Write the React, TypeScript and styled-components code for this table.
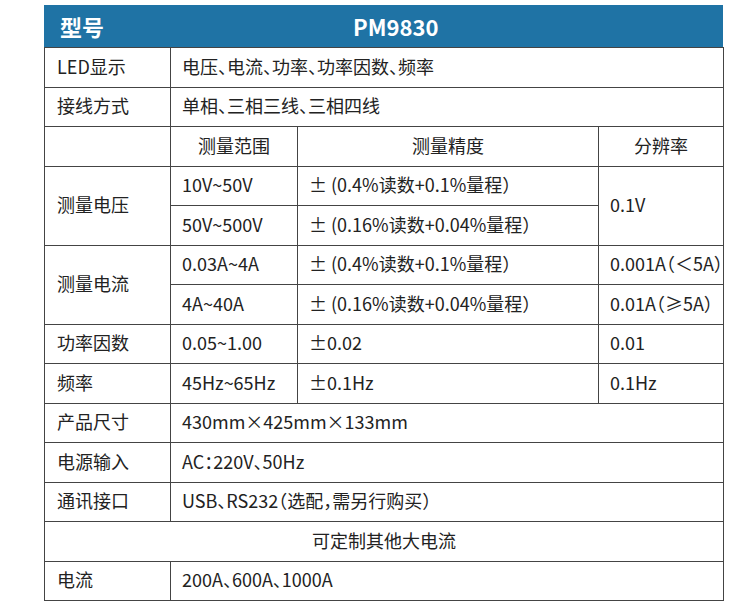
import styled, { createGlobalStyle } from "styled-components";

const GlobalStyle = createGlobalStyle`
  body {
    margin: 0;
    background: #ffffff;
    font-family: "Noto Sans CJK SC", "Noto Sans", sans-serif;
    color: #222222;
  }
`;

const Page = styled.div`
  padding: 5px 0 0 44px;
  width: 679px;
`;

const TitleBar = styled.div`
  display: grid;
  grid-template-columns: 293px auto;
  align-items: center;
  height: 42px;
  padding-left: 16px;
  background: #1f73a5;
  color: #ffffff;
  font-size: 22px;
  font-weight: 700;
`;

const Table = styled.table`
  width: 679px;
  border-collapse: collapse;
  table-layout: fixed;
  font-size: 18px;
  /* half-width punctuation, as in the source sheet */
  font-feature-settings: "halt";
`;

const Row = styled.tr`
  height: 39.5px;
`;

const Cell = styled.td<{ center?: boolean }>`
  border: 1px solid #444444;
  padding: 0 0 1px ${(props) => (props.center ? "0" : "11px")};
  text-align: ${(props) => (props.center ? "center" : "left")};
  vertical-align: middle;
  white-space: nowrap;
  line-height: 1.2;
`;

const HeadCell = styled(Cell)`
  padding-left: 12px;
`;

export default function App() {
  return (
    <>
      <GlobalStyle />
      <Page>
        <TitleBar>
          <span>型号</span>
          <span>PM9830</span>
        </TitleBar>
        <Table>
          <colgroup>
            <col style={{ width: 126 }} />
            <col style={{ width: 127 }} />
            <col style={{ width: 301 }} />
            <col style={{ width: 125 }} />
          </colgroup>
          <tbody>
            <Row>
              <HeadCell>LED显示</HeadCell>
              <Cell colSpan={3}>电压、电流、功率、功率因数、频率</Cell>
            </Row>
            <Row>
              <HeadCell>接线方式</HeadCell>
              <Cell colSpan={3}>单相、三相三线、三相四线</Cell>
            </Row>
            <Row>
              <HeadCell></HeadCell>
              <Cell center>测量范围</Cell>
              <Cell center>测量精度</Cell>
              <Cell center>分辨率</Cell>
            </Row>
            <Row>
              <HeadCell rowSpan={2}>测量电压</HeadCell>
              <Cell>10V~50V</Cell>
              <Cell>±&nbsp;(0.4%读数+0.1%量程）</Cell>
              <Cell rowSpan={2}>0.1V</Cell>
            </Row>
            <Row>
              <Cell>50V~500V</Cell>
              <Cell>±&nbsp;(0.16%读数+0.04%量程）</Cell>
            </Row>
            <Row>
              <HeadCell rowSpan={2}>测量电流</HeadCell>
              <Cell>0.03A~4A</Cell>
              <Cell>±&nbsp;(0.4%读数+0.1%量程）</Cell>
              <Cell>0.001A（＜5A）</Cell>
            </Row>
            <Row>
              <Cell>4A~40A</Cell>
              <Cell>±&nbsp;(0.16%读数+0.04%量程）</Cell>
              <Cell>0.01A（≥5A）</Cell>
            </Row>
            <Row>
              <HeadCell>功率因数</HeadCell>
              <Cell>0.05~1.00</Cell>
              <Cell>±0.02</Cell>
              <Cell>0.01</Cell>
            </Row>
            <Row>
              <HeadCell>频率</HeadCell>
              <Cell>45Hz~65Hz</Cell>
              <Cell>±0.1Hz</Cell>
              <Cell>0.1Hz</Cell>
            </Row>
            <Row>
              <HeadCell>产品尺寸</HeadCell>
              <Cell colSpan={3}>430mm×425mm×133mm</Cell>
            </Row>
            <Row>
              <HeadCell>电源输入</HeadCell>
              <Cell colSpan={3}>AC：220V、50Hz</Cell>
            </Row>
            <Row>
              <HeadCell>通讯接口</HeadCell>
              <Cell colSpan={3}>USB、RS232（选配，需另行购买）</Cell>
            </Row>
            <Row>
              <Cell colSpan={4} center>
                可定制其他大电流
              </Cell>
            </Row>
            <Row>
              <HeadCell>电流</HeadCell>
              <Cell colSpan={3}>200A、600A、1000A</Cell>
            </Row>
          </tbody>
        </Table>
      </Page>
    </>
  );
}
